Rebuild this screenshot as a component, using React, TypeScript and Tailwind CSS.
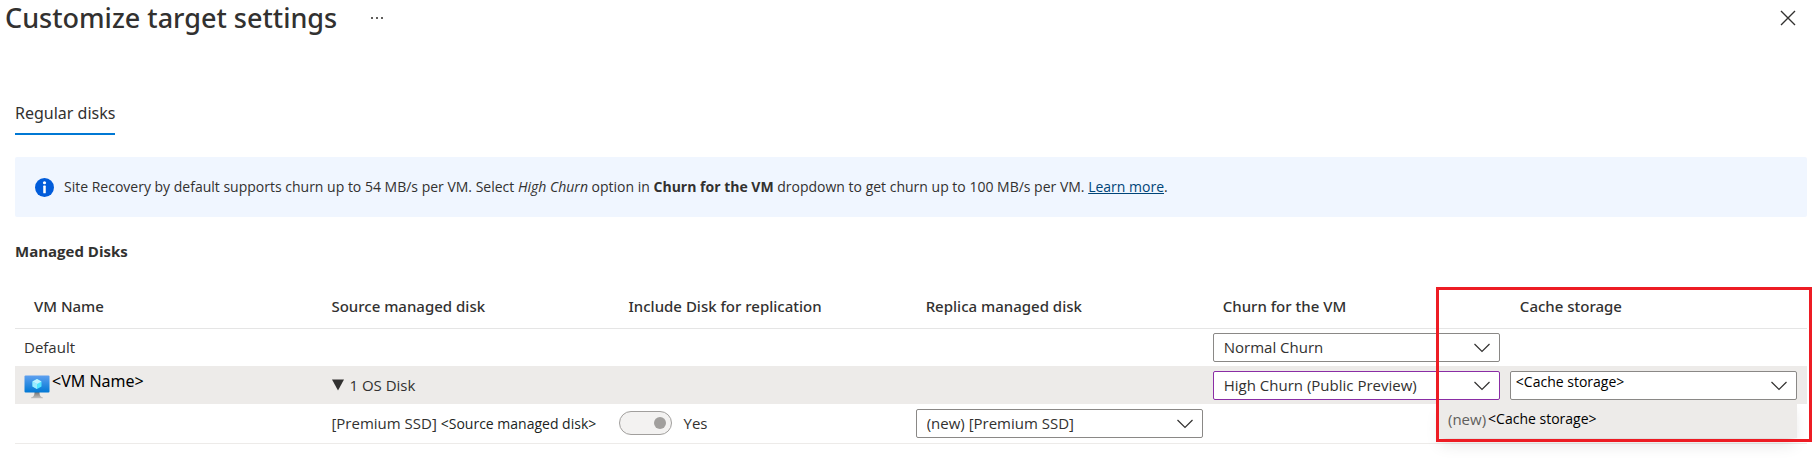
import { useState } from "react";
import type { ReactNode } from "react";

function Chevron() {
  return (
    <svg
      className="pointer-events-none absolute top-1/2 right-2.5 -mt-1 h-2.5 w-4"
      viewBox="0 0 16 10"
      fill="none"
      stroke="#323130"
      strokeWidth="1.2"
      aria-hidden="true"
    >
      <path d="M0.5 1 L8 8.5 L15.5 1" />
    </svg>
  );
}

type DropdownProps = {
  label: string;
  options: string[];
  tone?: string;
};

function Dropdown({
  label,
  options,
  tone = "border-[#8a8886] pl-2.5 text-[#323130]",
}: DropdownProps) {
  return (
    <div className="relative mr-2.5">
      <select
        aria-label={label}
        className={`block h-[29px] w-full appearance-none rounded-xs border bg-white pr-9 ${tone}`}
      >
        {options.map((option) => (
          <option key={option}>{option}</option>
        ))}
      </select>
      <Chevron />
    </div>
  );
}

function MonitorIcon() {
  return (
    <svg className="mt-1 h-6 w-[26px] shrink-0" viewBox="0 0 26 24" aria-hidden="true">
      <defs>
        <linearGradient id="screen" x1="0" y1="0" x2="0" y2="1">
          <stop offset="0" stopColor="#5ea0ef" />
          <stop offset="1" stopColor="#0078d4" />
        </linearGradient>
        <linearGradient id="stand" x1="0" y1="0" x2="0" y2="1">
          <stop offset="0" stopColor="#707070" />
          <stop offset="1" stopColor="#c4c4c4" />
        </linearGradient>
      </defs>
      <path d="M10.500 17h5c0 3 .5 4.800 3.500 5.500v.8H7v-.8c3-.7 3.500-2.500 3.500-5.500z" fill="url(#stand)" />
      <rect x="0.500" y="0.500" width="25" height="17" rx="1" fill="url(#screen)" />
      <path d="M13 4l4.500 2.500v5L13 14l-4.500-2.500v-5z" fill="#50e6ff" />
      <path d="M13 4l4.500 2.500L13 9.100 8.500 6.500z" fill="#c3f1ff" />
      <path d="M8.500 6.500L13 9.100V14l-4.500-2.500z" fill="#9cebff" />
    </svg>
  );
}

function HeaderCell({ children, pad = "pl-2.5" }: { children: ReactNode; pad?: string }) {
  return (
    <th scope="col" className={`h-[43px] text-left font-['Noto_Sans','Open_Sans',sans-serif] text-[15px] font-medium ${pad}`}>
      {children}
    </th>
  );
}

export default function App() {
  const [included, setIncluded] = useState(true);

  return (
    <main className="overflow-x-hidden bg-white pb-5 font-['Open_Sans','Noto_Sans',sans-serif] text-[15px] leading-5 text-[#323130]">
      <header className="flex h-9 items-center pr-5 pl-[5px]">
        <h1 className="font-['Noto_Sans','Open_Sans',sans-serif] text-[27px] leading-9 font-medium">
          Customize target settings
        </h1>
        <button type="button" aria-label="More actions" className="ml-7 p-1">
          <svg className="h-1 w-4" viewBox="0 0 16 4" fill="#605e5c" aria-hidden="true">
            <rect x="2" y="1" width="2" height="2" />
            <rect x="7" y="1" width="2" height="2" />
            <rect x="12" y="1" width="2" height="2" />
          </svg>
        </button>
        <button type="button" aria-label="Close" className="ml-auto">
          <svg className="size-4" viewBox="0 0 16 16" stroke="#323130" strokeWidth="1.4" aria-hidden="true">
            <path d="M1 1l14 14M15 1L1 15" />
          </svg>
        </button>
      </header>

      <div className="pr-[9px] pl-[15px]">
        <div role="tablist" className="flex pt-[67px]">
          <button
            type="button"
            role="tab"
            aria-selected="true"
            className="border-b-2 border-[#0078d4] pb-2.5 font-['Noto_Sans','Open_Sans',sans-serif] text-base leading-5"
          >
            Regular disks
          </button>
        </div>

        <div className="mt-[22px] flex h-[60px] items-center gap-2.5 rounded-xs bg-[#f0f6ff] pl-5 text-sm">
          <svg className="size-[19px] shrink-0" viewBox="0 0 18 18" aria-hidden="true">
            <circle cx="9" cy="9" r="9" fill="#015cda" />
            <circle cx="9" cy="4.500" r="1.500" fill="#fff" />
            <rect x="7.800" y="7.200" width="2.400" height="7.300" rx="0.500" fill="#fff" />
          </svg>
          <p>
            Site Recovery by default supports churn up to 54 MB/s per VM. Select <em>High Churn</em>{" "}
            option in <strong>Churn for the VM</strong> dropdown to get churn up to 100 MB/s per VM.{" "}
            <a href="#learn-more" className="text-[#004578] underline">
              Learn more
            </a>
            .
          </p>
        </div>

        <h2 className="mt-6 text-[15px] font-bold">Managed Disks</h2>

        <div className="relative mt-6">
          <table className="w-full table-fixed border-collapse">
            <colgroup>
              <col className="w-[17.1%]" />
              <col />
              <col />
              <col />
              <col />
              <col />
            </colgroup>
            <thead>
              <tr className="border-b border-[#e5e5e5]">
                <HeaderCell pad="pl-[19px]">VM Name</HeaderCell>
                <HeaderCell>Source managed disk</HeaderCell>
                <HeaderCell>Include Disk for replication</HeaderCell>
                <HeaderCell>Replica managed disk</HeaderCell>
                <HeaderCell>Churn for the VM</HeaderCell>
                <HeaderCell>Cache storage</HeaderCell>
              </tr>
            </thead>
            <tbody>
              <tr className="h-[38px]">
                <td className="pl-[9px]">Default</td>
                <td />
                <td />
                <td />
                <td>
                  <Dropdown
                    label="Default churn"
                    options={["Normal Churn", "High Churn (Public Preview)"]}
                  />
                </td>
                <td />
              </tr>
              <tr className="h-[38px] bg-[#edebe9]">
                <td className="pl-[9px]">
                  <div className="flex items-start gap-0.5 text-black">
                    <MonitorIcon />
                    <span className="font-['Noto_Sans','Open_Sans',sans-serif] text-base leading-5">
                      &lt;VM Name&gt;
                    </span>
                  </div>
                </td>
                <td className="pl-2.5">
                  <button type="button" className="flex items-center gap-1">
                    <svg className="h-3 w-3.5" viewBox="0 0 14 12" fill="#323130" aria-hidden="true">
                      <path d="M1 0.500h12L7 11.500z" />
                    </svg>
                    1 OS Disk
                  </button>
                </td>
                <td />
                <td />
                <td>
                  <Dropdown
                    label="Churn for the VM"
                    options={["High Churn (Public Preview)", "Normal Churn"]}
                    tone="border-[#8a2da5] pl-2.5 text-[#323130]"
                  />
                </td>
                <td>
                  <div className="relative">
                    <Dropdown
                      label="Cache storage"
                      options={["<Cache storage>"]}
                      tone="border-[#8a8886] pl-[5px] pb-[7px] text-sm text-black"
                    />
                    <ul
                      role="listbox"
                      aria-label="Cache storage options"
                      className="absolute top-full right-2.5 z-10 w-[360px] bg-[#edebe9] shadow-lg"
                    >
                      <li role="option" aria-selected="true" className="flex h-[38px] items-center gap-0.5 pl-[11px]">
                        <span className="text-[#605e5c]">(new)</span>
                        <span className="text-sm text-black">&lt;Cache storage&gt;</span>
                      </li>
                    </ul>
                  </div>
                </td>
              </tr>
              <tr className="h-[39px] border-b border-[#edebe9]">
                <td />
                <td className="pl-2.5 whitespace-nowrap">
                  [Premium SSD]{" "}
                  <span className="text-sm text-[#201f1e]">&lt;Source managed disk&gt;</span>
                </td>
                <td>
                  <div className="flex items-center gap-3">
                    <button
                      type="button"
                      role="switch"
                      aria-checked={included}
                      aria-labelledby="include-state"
                      onClick={() => setIncluded(!included)}
                      className={`flex h-6 w-[53px] items-center rounded-full border border-[#a19f9d] bg-[#f3f2f1] px-[5px] ${included ? "justify-end" : "justify-start"}`}
                    >
                      <span className="size-3 rounded-full bg-[#a19f9d]" />
                    </button>
                    <span id="include-state">{included ? "Yes" : "No"}</span>
                  </div>
                </td>
                <td>
                  <Dropdown label="Replica managed disk" options={["(new) [Premium SSD]"]} />
                </td>
                <td />
                <td />
              </tr>
            </tbody>
          </table>
          <div className="pointer-events-none absolute top-0.5 -right-[5px] z-20 h-[155px] w-[376px] border-3 border-[#ed1c24]" />
        </div>
      </div>
    </main>
  );
}
